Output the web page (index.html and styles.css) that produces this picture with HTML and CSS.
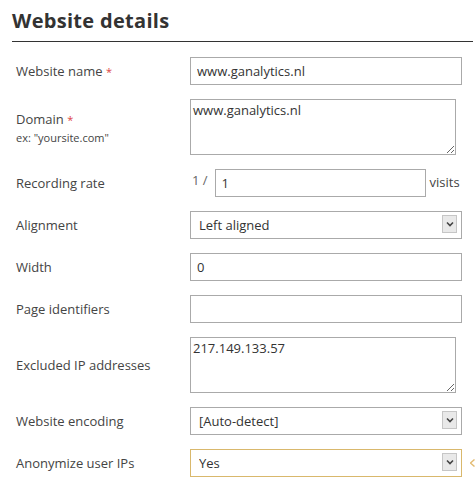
FILE: index.html
```html
<!DOCTYPE html>
<html lang="en">
<head>
    <meta charset="UTF-8">
    <title>Website details</title>
    <link rel="stylesheet" href="styles.css">
</head>
<body>
    <div class="panel">
        <h1>Website details</h1>

        <div class="form">
            <label class="label" for="name">Website name <span class="req">*</span></label>
            <div class="field"><input class="text" id="name" type="text" value="www.ganalytics.nl"></div>

            <label class="label" for="domain">Domain <span class="req">*</span><small>ex: "yoursite.com"</small></label>
            <div class="field"><textarea class="area" id="domain">www.ganalytics.nl</textarea></div>

            <label class="label" for="rate">Recording rate</label>
            <div class="field rate">
                <span class="pre">1 /</span>
                <input class="text" id="rate" type="text" value="1">
                <span class="post">visits</span>
            </div>

            <label class="label" for="align">Alignment</label>
            <div class="field">
                <div class="select">
                    <select id="align"><option>Left aligned</option></select>
                    <span class="arrow"><svg width="8" height="6" viewBox="0 0 8 6"><path d="M1 1.5 L4 4.5 L7 1.5" fill="none" stroke="#444" stroke-width="1.6"/></svg></span>
                </div>
            </div>

            <label class="label" for="width">Width</label>
            <div class="field"><input class="text" id="width" type="text" value="0"></div>

            <label class="label" for="pages">Page identifiers</label>
            <div class="field"><input class="text" id="pages" type="text" value=""></div>

            <label class="label" for="ips">Excluded IP addresses</label>
            <div class="field"><textarea class="area" id="ips">217.149.133.57</textarea></div>

            <label class="label" for="enc">Website encoding</label>
            <div class="field">
                <div class="select">
                    <select id="enc"><option>[Auto-detect]</option></select>
                    <span class="arrow"><svg width="8" height="6" viewBox="0 0 8 6"><path d="M1 1.5 L4 4.5 L7 1.5" fill="none" stroke="#444" stroke-width="1.6"/></svg></span>
                </div>
            </div>

            <label class="label" for="anon">Anonymize user IPs</label>
            <div class="field">
                <div class="select focus">
                    <select id="anon"><option>Yes</option></select>
                    <span class="arrow"><svg width="8" height="6" viewBox="0 0 8 6"><path d="M1 1.5 L4 4.5 L7 1.5" fill="none" stroke="#444" stroke-width="1.6"/></svg></span>
                    <svg class="hint" width="5" height="8" viewBox="0 0 5 8"><path d="M4.5 0.5 L0.5 4 L4.5 7.5" fill="none" stroke="#e3bb72" stroke-width="1.4"/></svg>
                </div>
            </div>
        </div>
    </div>
</body>
</html>
```
FILE: styles.css
```css
body {
    margin: 0;
    background-color: #ffffff;
    font-family: "Open Sans", "DejaVu Sans", sans-serif;
    color: #444;
}
.panel {
    margin: 0 3px 0 12px;
}
h1 {
    margin: 0;
    padding: 7px 0 7px 0;
    font-size: 20px;
    line-height: 27px;
    font-weight: bold;
    letter-spacing: 0.3px;
    color: #333;
    border-bottom: 1px solid #333;
}
.form {
    display: grid;
    grid-template-columns: 174px 272px;
    row-gap: 14px;
    align-items: center;
    margin-top: 15px;
    padding-left: 4px;
}
.label {
    font-size: 13px;
    color: #444;
}
.label small {
    display: block;
    font-size: 11px;
    margin-top: 2px;
}
.req {
    color: #d44;
    font-size: 11px;
}
.field {
    display: flex;
}
.text {
    box-sizing: border-box;
    width: 100%;
    height: 28px;
    border: 1px solid #aaa;
    padding: 0 6px;
    font-family: "Open Sans", "DejaVu Sans", sans-serif;
    font-size: 13px;
    color: #333;
    outline: none;
}
.area {
    box-sizing: border-box;
    width: 266px;
    height: 56px;
    border: 1px solid #aaa;
    padding: 1px 2px;
    font-family: "Open Sans", "DejaVu Sans", sans-serif;
    font-size: 13px;
    color: #333;
    outline: none;
}
.rate {
    align-items: flex-start;
}
.rate .pre {
    font-size: 13px;
    color: #666;
    padding: 2px 7px 0 2px;
}
.rate .text {
    width: 211px;
    flex: none;
}
.rate .post {
    font-size: 13px;
    color: #444;
    padding: 4px 0 0 4px;
}
.select {
    position: relative;
    width: 100%;
}
.select select {
    box-sizing: border-box;
    width: 100%;
    height: 28px;
    border: 1px solid #aaa;
    padding: 0 8px;
    background: #fff;
    font-family: "Open Sans", "DejaVu Sans", sans-serif;
    font-size: 13px;
    color: #333;
    appearance: none;
    -webkit-appearance: none;
    outline: none;
    border-radius: 0;
}
.select.focus select {
    border-color: #d9b86c;
}
.arrow {
    position: absolute;
    right: 5px;
    top: 4px;
    width: 15px;
    height: 18px;
    box-sizing: border-box;
    border: 1px solid #c6c6c6;
    background: #e9e9e9;
    display: flex;
    align-items: center;
    justify-content: center;
    pointer-events: none;
}
.hint {
    position: absolute;
    right: -13px;
    top: 10px;
}
```
